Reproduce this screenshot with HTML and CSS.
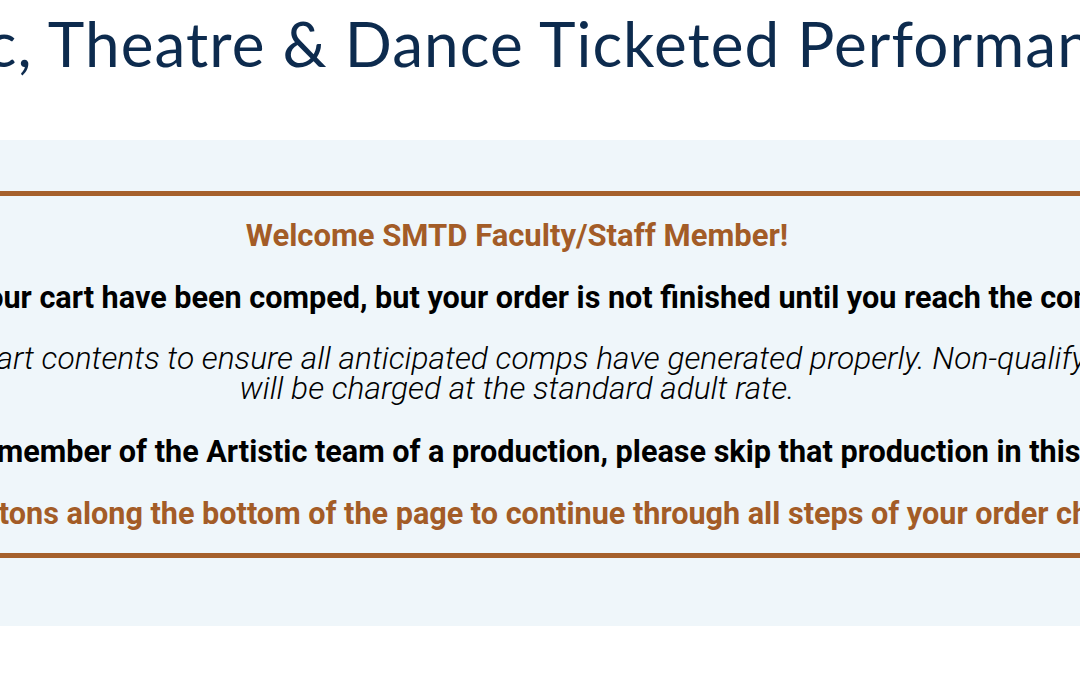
FILE: index.html
```html
<!DOCTYPE html>
<html lang="en">
<head>
  <meta charset="UTF-8">
  <meta name="viewport" content="width=device-width, initial-scale=1.0">
  <title>Music, Theatre &amp; Dance Ticketed Performances</title>
  <link rel="stylesheet" href="styles.css">
</head>
<body>
  <div class="page">
    <h1 class="page_title">Music, Theatre &amp; Dance Ticketed Performances</h1>

    <section class="panel">
      <div class="notice">
        <p class="welcome">Welcome SMTD Faculty/Staff Member!</p>
        <p class="strong">All items in your cart have been comped, but your order is not finished until you reach the confirmation.</p>
        <p class="review">Review your cart contents to ensure all anticipated comps have generated properly. Non-qualifying tickets will be charged at the standard adult rate.</p>
        <p class="strong artistic">If you are a member of the Artistic team of a production, please skip that production in this process</p>
        <p class="steps">Use the buttons along the bottom of the page to continue through all steps of your order checkout.</p>
      </div>
    </section>
  </div>
</body>
</html>
```

FILE: styles.css
```css
html,body{  margin:0; padding:0; }
body{  background:#fff; overflow:hidden; font-family:Roboto, "Liberation Sans", sans-serif; }
p,h1{  margin:0; }

.page{  width:1560px; margin-left:-263px; }

.page_title{
  font-family:Lato, "Open Sans", sans-serif; font-weight:400;
  font-size:62px; line-height:74px; letter-spacing:1.1px; color:#0d2b4e;
  text-align:center; white-space:nowrap; padding-top:6px; margin-bottom:60px;
}

.panel{  background:#eff6fa; padding:51px 0 68px; }
.notice{
  border-top:5px solid #a5602c; border-bottom:5px solid #a5602c;
  padding:22px 60px 21px; text-align:center;
}
.notice>p{  font-size:30.6px; line-height:36px; font-weight:700; color:#000; }
.notice>.welcome{  font-size:31px; color:#a35c27; margin-bottom:26px; }
.notice>.strong{  margin-bottom:28px; }
.notice>.review{  font-size:31.7px; font-style:italic; font-weight:300; line-height:30px; margin-bottom:30px; }
.notice>.artistic{  margin-bottom:26px; }
.notice>.steps{  color:#a35c27; }
```
